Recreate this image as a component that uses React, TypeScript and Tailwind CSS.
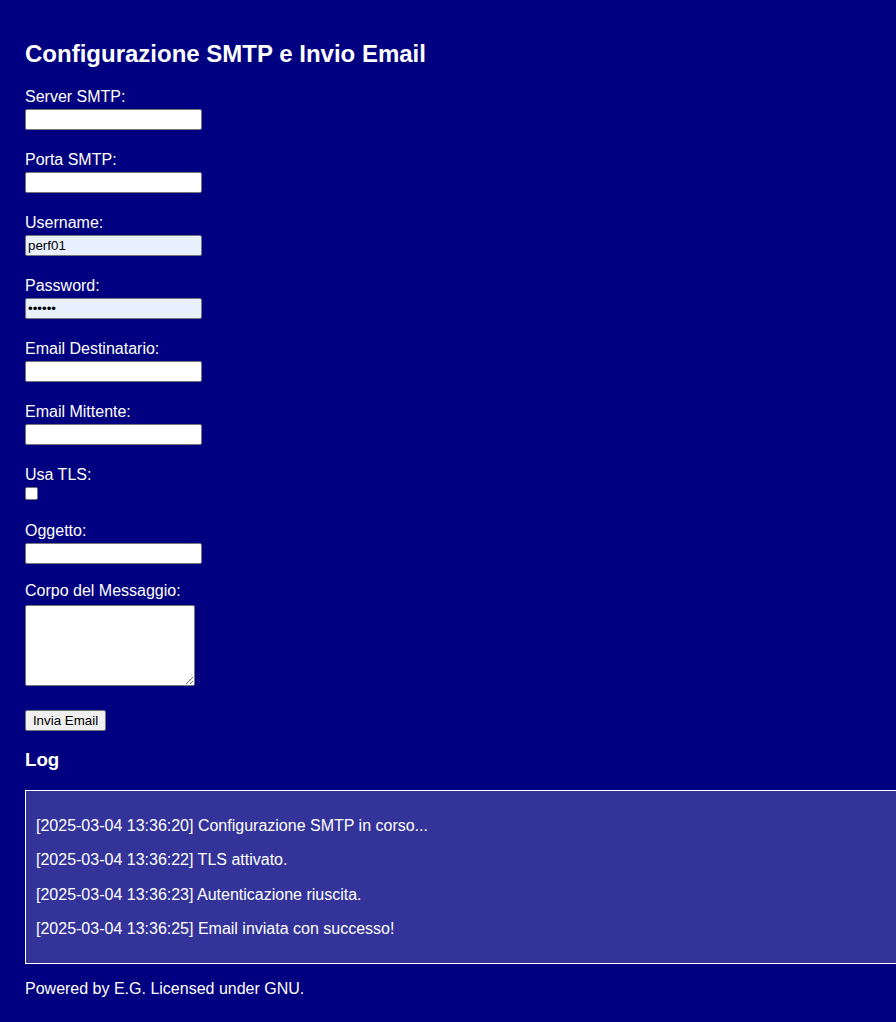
import React from "react";

const font = { fontFamily: '"Liberation Sans", Arial, sans-serif' };

function Field({
  label,
  first,
  children,
}: {
  label: string;
  first?: boolean;
  children: React.ReactNode;
}) {
  return (
    <div className={first ? "" : "mt-[21px]"}>
      <label className="block text-[16px] leading-[18px] text-white">{label}</label>
      {children}
    </div>
  );
}

const inputCls =
  "block mt-[3px] w-[177px] h-[21px] border border-[#767676] rounded-[2px] px-[2px] text-[13.33px] text-black outline-none";

export default function App() {
  const logs = [
    "[2025-03-04 13:36:20] Configurazione SMTP in corso...",
    "[2025-03-04 13:36:22] TLS attivato.",
    "[2025-03-04 13:36:23] Autenticazione riuscita.",
    "[2025-03-04 13:36:25] Email inviata con successo!",
  ];
  return (
    <div
      className="min-h-screen w-full overflow-hidden bg-[#000080] pl-[25px] pt-[40px] pb-[24px] text-white"
      style={font}
    >
      <h2 className="text-[24px] leading-[28px] font-bold">
        Configurazione SMTP e Invio Email
      </h2>

      <form className="mt-[20px]" onSubmit={(e) => e.preventDefault()}>
        <Field label="Server SMTP:" first>
          <input type="text" className={inputCls + " bg-white"} style={font} />
        </Field>
        <Field label="Porta SMTP:">
          <input type="text" className={inputCls + " bg-white"} style={font} />
        </Field>
        <Field label="Username:">
          <input
            type="text"
            defaultValue="perf01"
            className={inputCls + " bg-[#e8f0fe]"}
            style={font}
          />
        </Field>
        <Field label="Password:">
          <input
            type="password"
            defaultValue="perf01"
            className={inputCls + " bg-[#e8f0fe]"}
            style={font}
          />
        </Field>
        <Field label="Email Destinatario:">
          <input type="email" className={inputCls + " bg-white"} style={font} />
        </Field>
        <Field label="Email Mittente:">
          <input type="email" className={inputCls + " bg-white"} style={font} />
        </Field>
        <Field label="Usa TLS:">
          <input
            type="checkbox"
            className="block mt-[3px] w-[13px] h-[13px] appearance-none bg-white border border-[#767676] rounded-[2px]"
          />
        </Field>
        <div className="mt-[22px]">
          <label className="block text-[16px] leading-[18px] text-white">Oggetto:</label>
          <input type="text" className={inputCls + " bg-white"} style={font} />
        </div>
        <div className="mt-[18px]">
          <label className="block text-[16px] leading-[18px] text-white">
            Corpo del Messaggio:
          </label>
          <textarea
            className="block mt-[5px] w-[170px] h-[81px] bg-white border border-[#767676] rounded-[2px] p-[2px] text-[13.33px] text-black resize outline-none"
            style={font}
          />
        </div>
        <button
          type="submit"
          className="block mt-[24px] h-[21px] w-[81px] px-0 bg-[#efefef] border border-[#767676] rounded-[2px] text-[13.33px] leading-[17px] text-black text-center"
          style={font}
        >
          Invia Email
        </button>
      </form>

      <h3 className="mt-[18px] text-[18.72px] leading-[22px] font-bold">Log</h3>

      <div className="mt-[19px] box-content w-full border border-white bg-[#333399] px-[10px] pt-[10px] pb-[8px]">
        {logs.map((l, i) => (
          <p key={i} className="my-[16px] text-[16px] leading-[18.4px] text-white">
            {l}
          </p>
        ))}
      </div>

      <p className="mt-[16px] text-[16px] leading-[18.4px] text-white">
        Powered by E.G. Licensed under GNU.
      </p>
    </div>
  );
}
